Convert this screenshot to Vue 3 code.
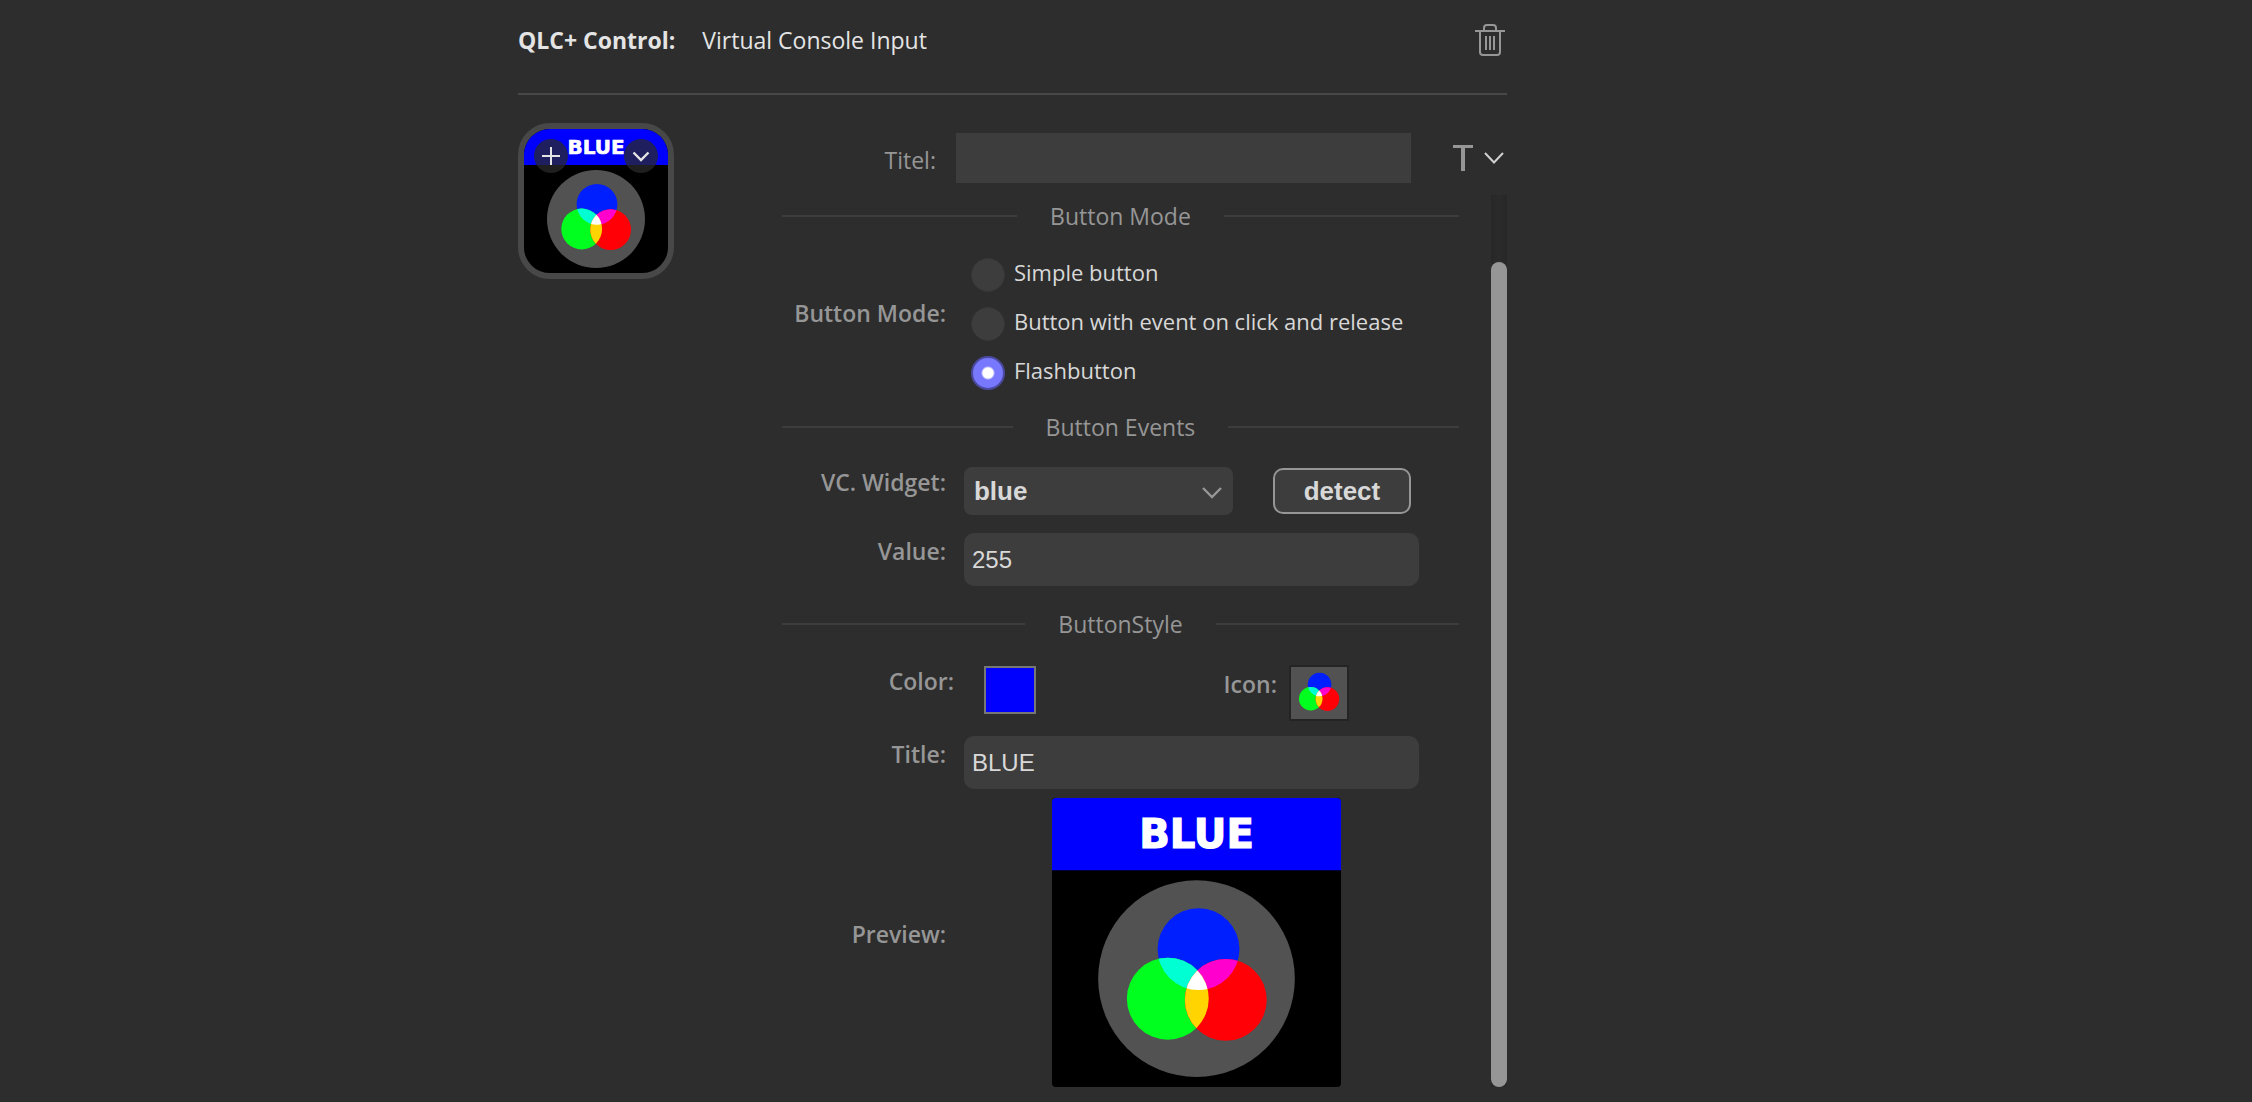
<script setup>
import { ref } from 'vue'

const title = ref('')
const modes = [
  { id: 'simple', label: 'Simple button' },
  { id: 'release', label: 'Button with event on click and release' },
  { id: 'flash', label: 'Flashbutton' },
]
const mode = ref('flash')
const widgets = ['blue', 'red', 'green']
const widget = ref('blue')
const value = ref('255')
const color = ref('#0000ff')
const buttonTitle = ref('BLUE')
</script>

<template>
  <main class="inspector">
    <svg class="defs" width="0" height="0" aria-hidden="true">
      <defs>
        <clipPath id="clip-green"><circle cx="57.7" cy="100" r="20.4" /></clipPath>
        <clipPath id="clip-red"><circle cx="86.6" cy="100.6" r="20.4" /></clipPath>
        <symbol id="rgb" viewBox="0 0 144 144" overflow="visible">
          <circle cx="73" cy="75.3" r="20.4" fill="#001fff" />
          <circle cx="57.7" cy="100" r="20.4" fill="#00ff1f" />
          <circle cx="86.6" cy="100.6" r="20.4" fill="#ff0006" />
          <circle cx="73" cy="75.3" r="20.4" fill="#00ffd2" clip-path="url(#clip-green)" />
          <circle cx="73" cy="75.3" r="20.4" fill="#ff00cd" clip-path="url(#clip-red)" />
          <circle cx="57.7" cy="100" r="20.4" fill="#ffd400" clip-path="url(#clip-red)" />
          <g clip-path="url(#clip-green)">
            <circle cx="73" cy="75.3" r="20.4" fill="#fff" clip-path="url(#clip-red)" />
          </g>
        </symbol>
      </defs>
    </svg>

    <header class="top">
      <h1>QLC+ Control:</h1>
      <p>Virtual Console Input</p>
      <button class="bare trash" type="button" aria-label="Delete">
        <svg width="30" height="32" viewBox="0 0 30 32" fill="none" stroke="currentColor" stroke-width="2">
          <path d="M0 7H30M5 7V28Q5 31 8 31H22Q25 31 25 28V7M9 7V4Q9 1 12 1H18Q21 1 21 4V7M11 12V26M15 12V26M19 12V26" />
        </svg>
      </button>
    </header>

    <div class="body">
      <div class="key">
        <svg class="face" viewBox="0 0 144 144">
          <rect width="144" height="144" fill="#000" />
          <rect width="144" height="36" :fill="color" />
          <text x="72" y="25" text-anchor="middle" class="face-text">{{ buttonTitle }}</text>
          <circle cx="72" cy="90" r="49" fill="#525252" />
          <use href="#rgb" width="144" height="144" />
        </svg>
        <div class="key-actions">
          <button class="bare round" type="button" aria-label="Add">
            <svg width="18" height="18" viewBox="0 0 18 18" fill="none" stroke="currentColor" stroke-width="2"><path d="M0 9H18M9 0V18" /></svg>
          </button>
          <button class="bare round" type="button" aria-label="More">
            <svg width="18" height="18" viewBox="0 0 18 18" fill="none" stroke="currentColor" stroke-width="2.4"><path d="M1.5 5.5L9 13L16.5 5.5" /></svg>
          </button>
        </div>
      </div>

      <div class="settings">
        <div class="title-row">
          <label for="key-title">Titel:</label>
          <input id="key-title" v-model="title" class="field square" type="text" />
          <button class="bare type" type="button" aria-label="Text format">
            <svg width="20" height="26" viewBox="0 0 20 26" fill="#969696"><path d="M0 0H20V3H12V26H8V3H0Z" /></svg>
            <svg width="20" height="12" viewBox="0 0 20 12" fill="none" stroke="#d0d0d0" stroke-width="2"><path d="M1 1L10 10.5L19 1" /></svg>
          </button>
        </div>

        <div class="scroller">
          <form class="content" @submit.prevent>
            <h2>Button Mode</h2>
            <div class="section mode">
              <div class="row" role="radiogroup" aria-labelledby="mode-label">
                <span id="mode-label" class="label">Button Mode:</span>
                <div class="radios">
                  <label v-for="m in modes" :key="m.id" class="radio">
                    <input v-model="mode" type="radio" name="mode" :value="m.id" />
                    <span>{{ m.label }}</span>
                  </label>
                </div>
              </div>
            </div>

            <h2>Button Events</h2>
            <div class="section events">
              <div class="row">
                <label class="label" for="widget">VC. Widget:</label>
                <div class="controls">
                  <div class="select">
                    <select id="widget" v-model="widget">
                      <option v-for="w in widgets" :key="w">{{ w }}</option>
                    </select>
                    <svg width="20" height="12" viewBox="0 0 20 12" fill="none" stroke="#969696" stroke-width="2.4"><path d="M1 1L10 10L19 1" /></svg>
                  </div>
                  <button class="detect" type="button">detect</button>
                </div>
              </div>
              <div class="row">
                <label class="label" for="value">Value:</label>
                <input id="value" v-model="value" class="field" type="text" />
              </div>
            </div>

            <h2>ButtonStyle</h2>
            <div class="section look">
              <div class="row color-row">
                <div class="color-pick">
                  <label class="label" for="color">Color:</label>
                  <input id="color" v-model="color" class="swatch" type="color" />
                </div>
                <label class="label icon-label" for="icon">Icon:</label>
                <button id="icon" class="bare icon" type="button" aria-label="Choose icon">
                  <svg width="56" height="52" viewBox="24 45 96 90"><use href="#rgb" width="144" height="144" /></svg>
                </button>
              </div>
              <div class="row">
                <label class="label" for="button-title">Title:</label>
                <input id="button-title" v-model="buttonTitle" class="field" type="text" />
              </div>
              <div class="row preview-row">
                <span class="label">Preview:</span>
                <div class="controls preview">
                  <svg class="face" viewBox="0 0 144 144">
                    <rect width="144" height="144" fill="#000" />
                    <rect width="144" height="36" :fill="color" />
                    <text x="72" y="25" text-anchor="middle" class="face-text">{{ buttonTitle }}</text>
                    <circle cx="72" cy="90" r="49" fill="#525252" />
                    <use href="#rgb" width="144" height="144" />
                  </svg>
                </div>
              </div>
            </div>
          </form>
          <div class="track"><div class="thumb"></div></div>
        </div>
      </div>
    </div>
  </main>
</template>

<style>
body {
  background: #2d2d2d;
}
</style>

<style scoped>
* {
  box-sizing: border-box;
}

.inspector {
  width: 43.9%;
  min-width: 988px;
  margin-left: 23%;
  color: #969696;
  font: 23px/32px "Open Sans", sans-serif;
}

.defs {
  position: absolute;
}

h1,
h2,
p {
  margin: 0;
  font-size: inherit;
}

.bare {
  padding: 0;
  border: 0;
  background: none;
  color: inherit;
}

svg {
  display: block;
}

.top {
  display: flex;
  gap: 27px;
  padding: 24px 2px 37px 0;
  border-bottom: 2px solid #484848;
  color: #e4e4e4;
}

.trash {
  margin-left: auto;
  color: #969696;
}

.body {
  display: flex;
  align-items: flex-start;
  gap: 108px;
  padding-top: 28px;
}

.key {
  position: relative;
  flex: none;
  width: 156px;
  height: 156px;
  overflow: hidden;
  border: 6px solid #484848;
  border-radius: 32px;
}

.face {
  width: 100%;
}

.face-text {
  fill: #fff;
  stroke: #fff;
  stroke-width: 0.6px;
  font: bold 20px "DejaVu Sans", sans-serif;
}

.key-actions {
  position: absolute;
  top: 10px;
  left: 10px;
  right: 10px;
  display: flex;
  justify-content: space-between;
}

.round {
  display: grid;
  place-items: center;
  width: 34px;
  height: 34px;
  border-radius: 50%;
  background: rgba(42, 42, 42, 0.75);
  color: #e4e4e4;
}

.settings {
  flex: 1;
}

.title-row {
  display: flex;
  align-items: center;
  padding: 10px 0 12px;
}

.title-row label {
  width: 154px;
  margin-right: 20px;
  padding-top: 3px;
  text-align: right;
}

.field {
  width: 455px;
  height: 53px;
  padding: 0 8px;
  border: 0;
  border-radius: 10px;
  background: #3d3d3d;
  color: #d8d8d8;
  font: 24px "Liberation Sans", sans-serif;
}

.square {
  height: 50px;
  border-radius: 0;
}

.type {
  display: flex;
  align-items: center;
  gap: 11px;
  margin-left: 42px;
}

.scroller {
  display: flex;
  justify-content: space-between;
}

.content {
  width: 677px;
  padding-top: 5px;
}

h2 {
  display: flex;
  align-items: center;
  gap: 33px;
  font-weight: 400;
}

h2::before,
h2::after {
  content: "";
  flex: 1;
  height: 2px;
  background: #3d3d3d;
}

.section {
  display: flex;
  flex-direction: column;
}

.mode {
  padding: 18px 0 14px;
}

.events {
  gap: 18px;
  padding: 24px 0 22px;
}

.look {
  gap: 15px;
  padding-top: 25px;
}

.row {
  display: flex;
  align-items: center;
  gap: 18px;
}

.label {
  width: 164px;
  padding-bottom: 18px;
  font-weight: 600;
  line-height: 30px;
  text-align: right;
}

.mode .label {
  padding-bottom: 22px;
}

.radios {
  padding-left: 7px;
}

.radio {
  display: flex;
  align-items: center;
  gap: 9px;
  height: 49px;
  color: #d8d8d8;
  font-size: 22px;
}

.radio span {
  padding-bottom: 6px;
}

.radio input {
  appearance: none;
  width: 34px;
  height: 34px;
  margin: 0;
  border: 1px solid #363636;
  border-radius: 50%;
  background: #3d3d3d;
}

.radio input:checked {
  border: 2px solid #4b4aa0;
  background: radial-gradient(circle, #fff 5px, #7878ff 7px);
}

.controls {
  display: flex;
  align-items: center;
  width: 455px;
}

.select {
  position: relative;
  width: 269px;
}

.select select {
  display: block;
  appearance: none;
  width: 100%;
  height: 48px;
  padding: 0 10px;
  border: 0;
  border-radius: 8px;
  background: #3d3d3d;
  color: #d8d8d8;
  font: bold 26px "Liberation Sans", sans-serif;
}

.select svg {
  position: absolute;
  top: 20px;
  right: 11px;
  pointer-events: none;
}

.detect {
  width: 138px;
  height: 46px;
  margin-left: 40px;
  padding: 0;
  border: 2px solid #969696;
  border-radius: 10px;
  background: #3d3d3d;
  color: #d8d8d8;
  font: bold 26px "Liberation Sans", sans-serif;
}

.color-row {
  gap: 12px;
  padding-right: 110px;
}

.color-pick {
  display: flex;
  align-items: center;
  gap: 30px;
  margin-right: auto;
  padding-bottom: 6px;
}

.color-pick .label {
  width: 172px;
}

.icon-label {
  width: auto;
}

.swatch {
  appearance: none;
  width: 52px;
  height: 48px;
  padding: 0;
  border: 2px solid #767676;
  background: none;
}

.swatch::-webkit-color-swatch-wrapper {
  padding: 0;
}

.swatch::-webkit-color-swatch {
  border: 0;
  border-radius: 0;
}

.icon {
  border: 2px solid #242424;
  background: #525252;
}

.preview-row {
  margin-top: -6px;
}

.preview {
  padding-left: 88px;
}

.preview .face {
  width: 289px;
  border-radius: 4px;
}

.track {
  display: flex;
  width: 16px;
  padding-top: 67px;
  background: linear-gradient(90deg, #272727, #2b2b2b 50%, #272727);
}

.thumb {
  flex: 1;
  border-radius: 8px;
  background: #969696;
}
</style>
